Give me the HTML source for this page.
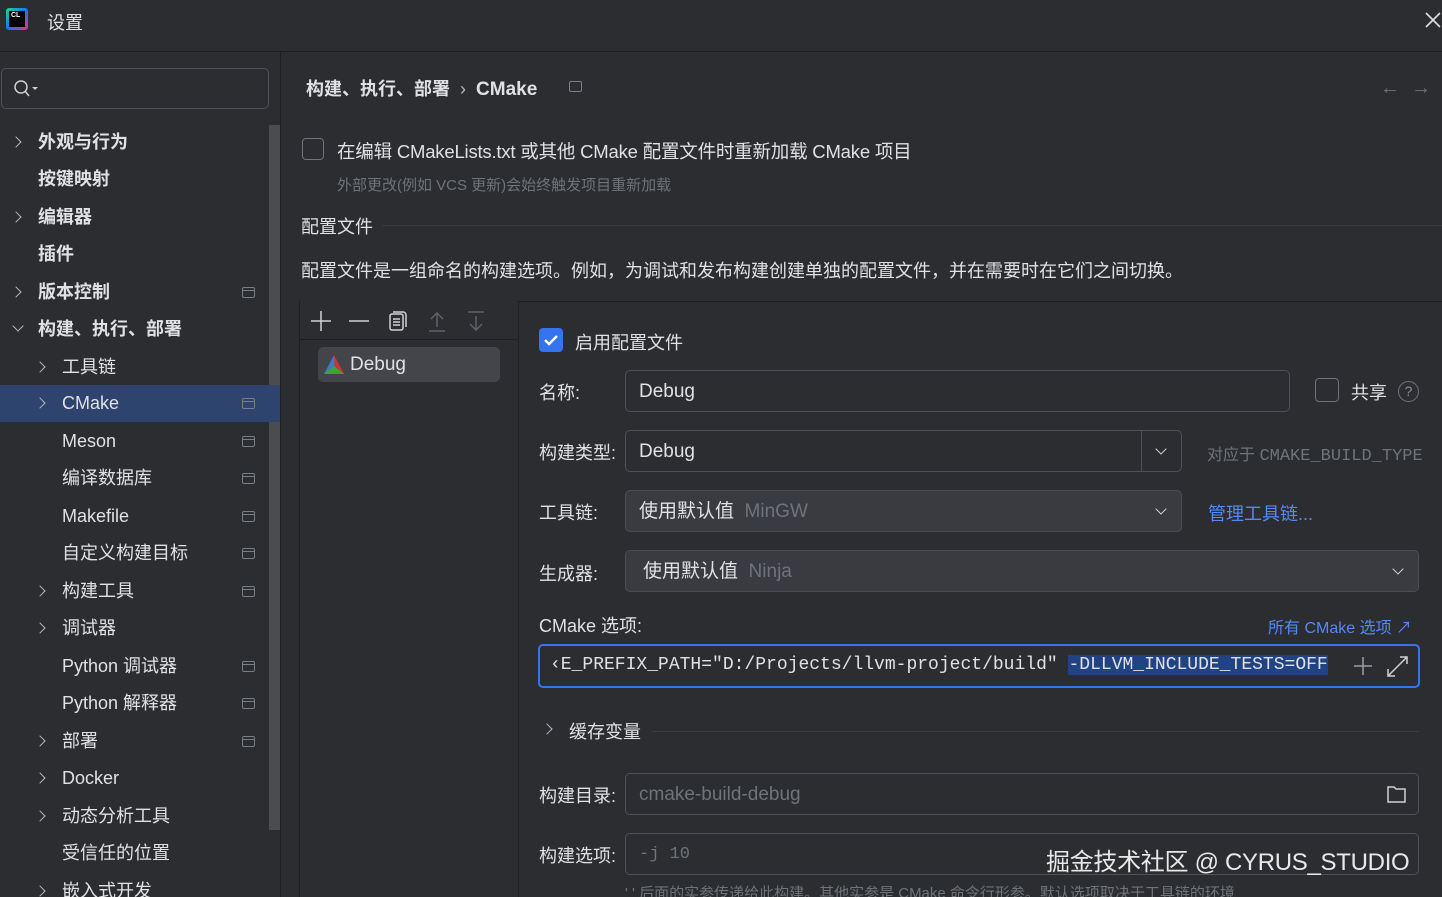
<!DOCTYPE html>
<html style="overflow:hidden;height:897px"><head><meta charset="utf-8"><style>
*{box-sizing:border-box;margin:0;padding:0}
body{width:1442px;height:897px;overflow:hidden;background:#2b2d30;font-family:"Liberation Sans","Noto Sans CJK SC",sans-serif;color:#dfe1e5;position:relative;font-size:18px}
.a{position:absolute;white-space:nowrap}
.row{position:absolute;left:0;width:270px;height:37px;line-height:37px;font-size:18px}
.row.b{font-weight:bold}
.chev{position:absolute;width:8px;height:8px;border-right:1.5px solid #b4b8bf;border-bottom:1.5px solid #b4b8bf;transform:rotate(-45deg)}
.chev.d{transform:rotate(45deg)}
.pin{position:absolute;left:242px;top:13px;width:13px;height:11px;border:1.5px solid #7a7e85;border-radius:2px}
.pin:after{content:"";position:absolute;left:0;right:0;top:2px;border-top:1.5px solid #7a7e85}
.inp{position:absolute;border:1px solid #4e5157;border-radius:5px;height:42px;line-height:40px;padding-left:13px;font-size:19px}
.dd{background:#393b40;border-color:#4a4d52}
.arr{position:absolute;width:8px;height:8px;border-right:1.5px solid #cfd1d5;border-bottom:1.5px solid #cfd1d5;transform:rotate(45deg)}
.lbl{position:absolute;font-size:18px;left:539px}
.mono{font-family:"Liberation Mono","DejaVu Sans Mono",monospace}
</style></head><body>
<div class="a" style="left:6px;top:8px;width:22px;height:22px;background:linear-gradient(135deg,#21d789,#087cfa 50%,#fc2b76);border-radius:3px"></div>
<div class="a" style="left:9px;top:11px;width:16px;height:16px;background:#000;color:#fff;font-size:7px;font-weight:bold;padding:1px 2px">CL</div>
<div class="a" style="left:47px;top:9px;font-size:18px">设置</div>
<svg class="a" style="left:1424px;top:10px" width="18" height="20"><path d="M2 3L16 17M16 3L2 17" stroke="#dfe1e5" stroke-width="1.6"/></svg>
<div class="a" style="left:0;top:51px;width:1442px;border-top:1px solid #1e1f22"></div>
<div class="a" style="left:1px;top:68px;width:268px;height:41px;border:1px solid #4e5157;border-radius:5px"></div>
<svg class="a" style="left:12px;top:78px" width="28" height="22"><circle cx="9" cy="9" r="6" stroke="#cfd1d5" stroke-width="1.5" fill="none"/><path d="M13 13L17 18" stroke="#cfd1d5" stroke-width="1.5"/><path d="M20 9h6l-3 3z" fill="#cfd1d5"/></svg>
<div class="a" style="left:269px;top:125px;width:11px;height:705px;background:#4a4c50"></div>
<div class="a" style="left:0;top:385px;width:280px;height:37px;background:#2e436e"></div>
<div class="row b" style="top:124px"><span class="chev" style="left:12px;top:14px"></span><span class="a" style="left:38px">外观与行为</span></div>
<div class="row b" style="top:161px"><span class="a" style="left:38px">按键映射</span></div>
<div class="row b" style="top:199px"><span class="chev" style="left:12px;top:14px"></span><span class="a" style="left:38px">编辑器</span></div>
<div class="row b" style="top:236px"><span class="a" style="left:38px">插件</span></div>
<div class="row b" style="top:274px"><span class="chev" style="left:12px;top:14px"></span><span class="a" style="left:38px">版本控制</span><span class="pin"></span></div>
<div class="row b" style="top:311px"><span class="chev d" style="left:14px;top:11px"></span><span class="a" style="left:38px">构建、执行、部署</span></div>
<div class="row" style="top:349px"><span class="chev" style="left:36px;top:14px"></span><span class="a" style="left:62px">工具链</span></div>
<div class="row" style="top:385px"><span class="chev" style="left:36px;top:14px"></span><span class="a" style="left:62px">CMake</span><span class="pin"></span></div>
<div class="row" style="top:423px"><span class="a" style="left:62px">Meson</span><span class="pin"></span></div>
<div class="row" style="top:460px"><span class="a" style="left:62px">编译数据库</span><span class="pin"></span></div>
<div class="row" style="top:498px"><span class="a" style="left:62px">Makefile</span><span class="pin"></span></div>
<div class="row" style="top:535px"><span class="a" style="left:62px">自定义构建目标</span><span class="pin"></span></div>
<div class="row" style="top:573px"><span class="chev" style="left:36px;top:14px"></span><span class="a" style="left:62px">构建工具</span><span class="pin"></span></div>
<div class="row" style="top:610px"><span class="chev" style="left:36px;top:14px"></span><span class="a" style="left:62px">调试器</span></div>
<div class="row" style="top:648px"><span class="a" style="left:62px">Python 调试器</span><span class="pin"></span></div>
<div class="row" style="top:685px"><span class="a" style="left:62px">Python 解释器</span><span class="pin"></span></div>
<div class="row" style="top:723px"><span class="chev" style="left:36px;top:14px"></span><span class="a" style="left:62px">部署</span><span class="pin"></span></div>
<div class="row" style="top:760px"><span class="chev" style="left:36px;top:14px"></span><span class="a" style="left:62px">Docker</span></div>
<div class="row" style="top:798px"><span class="chev" style="left:36px;top:14px"></span><span class="a" style="left:62px">动态分析工具</span></div>
<div class="row" style="top:835px"><span class="a" style="left:62px">受信任的位置</span></div>
<div class="row" style="top:873px"><span class="chev" style="left:36px;top:14px"></span><span class="a" style="left:62px">嵌入式开发</span></div>
<div class="a" style="left:280px;top:52px;height:845px;border-left:1px solid #1e1f22"></div>
<div class="a" style="left:306px;top:75px;font-size:18px;font-weight:bold">构建、执行、部署 &nbsp;<span style="font-weight:normal;color:#b4b8bf">›</span>&nbsp; <span style="font-size:19px">CMake</span></div>
<div class="a" style="left:569px;top:81px;width:13px;height:11px;border:1.5px solid #7a7e85;border-radius:2px"></div>
<div class="a" style="left:1380px;top:77px;color:#6f737a;font-size:20px">←&nbsp;&nbsp;→</div>
<div class="a" style="left:302px;top:138px;width:22px;height:22px;border:1.5px solid #6f737a;border-radius:4px"></div>
<div class="a" style="left:337px;top:138px;font-size:18.5px;letter-spacing:-0.2px">在编辑 CMakeLists.txt 或其他 CMake 配置文件时重新加载 CMake 项目</div>
<div class="a" style="left:337px;top:174px;font-size:15px;color:#6f737a">外部更改(例如 VCS 更新)会始终触发项目重新加载</div>
<div class="a" style="left:301px;top:213px;font-size:18px">配置文件</div>
<div class="a" style="left:382px;top:225px;width:1060px;border-top:1px solid #393b40"></div>
<div class="a" style="left:301px;top:257px;font-size:18px">配置文件是一组命名的构建选项。例如，为调试和发布构建创建单独的配置文件，并在需要时在它们之间切换。</div>
<div class="a" style="left:299px;top:301px;width:1143px;border-top:1px solid #1e1f22"></div>
<div class="a" style="left:299px;top:301px;width:220px;height:596px;background:#2b2d30;border-left:1px solid #1e1f22;border-right:1px solid #1e1f22"></div>
<div class="a" style="left:300px;top:339px;width:219px;border-top:1px solid #1e1f22"></div>
<svg class="a" style="left:308px;top:309px" width="190" height="26"><g stroke="#cfd1d5" stroke-width="1.5" fill="none"><path d="M3 12h20M13 2v20"/><path d="M41 12h20"/><rect x="82" y="5" width="13" height="16" rx="2"/><path d="M85 3h10a3 3 0 0 1 3 3v12M85 10h7M85 13h7M85 16h7"/></g><g stroke="#5f6268" stroke-width="1.5" fill="none"><path d="M121 22h16M129 18V4M123 10l6-6 6 6"/><path d="M160 3h16M168 7v14M162 15l6 6 6-6"/></g></svg>
<div class="a" style="left:318px;top:347px;width:182px;height:35px;background:#43454a;border-radius:5px"></div>
<svg class="a" style="left:323px;top:354px" width="22" height="21"><path d="M11 1L1 20h20z" fill="#3c7ac4"/><path d="M11 1L21 20H12z" fill="#d03030"/><path d="M1 20L11 12L21 20z" fill="#3aa43a"/></svg>
<div class="a" style="left:350px;top:354px;font-size:19px">Debug</div>
<div class="a" style="left:539px;top:328px;width:24px;height:24px;background:#3574f0;border-radius:4px"></div>
<svg class="a" style="left:539px;top:328px" width="24" height="24"><path d="M6 12l4 4 8-8" stroke="#fff" stroke-width="2.4" fill="none"/></svg>
<div class="a" style="left:575px;top:329px;font-size:18px">启用配置文件</div>
<div class="lbl" style="top:379px">名称:</div>
<div class="inp" style="left:625px;top:370px;width:665px;line-height:42px">Debug</div>
<div class="a" style="left:1315px;top:378px;width:24px;height:24px;border:1.5px solid #6f737a;border-radius:4px"></div>
<div class="a" style="left:1351px;top:379px;font-size:18px">共享</div>
<div class="a" style="left:1398px;top:381px;width:21px;height:21px;border:1.5px solid #6f737a;border-radius:50%;color:#8a8e95;font-size:14px;text-align:center;line-height:18px">?</div>
<div class="lbl" style="top:439px">构建类型:</div>
<div class="inp" style="left:625px;top:430px;width:557px;line-height:42px">Debug</div>
<div class="a" style="left:1141px;top:431px;height:40px;border-left:1px solid #4e5157"></div>
<div class="arr" style="left:1157px;top:445px"></div>
<div class="a" style="left:1207px;top:441px;font-size:16px;color:#6f737a">对应于 <span class="mono" style="font-size:17px">CMAKE_BUILD_TYPE</span></div>
<div class="lbl" style="top:499px">工具链:</div>
<div class="inp dd" style="left:625px;top:490px;width:557px;line-height:42px">使用默认值 <span style="color:#6f737a">&nbsp;MinGW</span></div>
<div class="arr" style="left:1157px;top:505px"></div>
<div class="a" style="left:1208px;top:500px;font-size:18px;color:#548af7">管理工具链...</div>
<div class="lbl" style="top:560px">生成器:</div>
<div class="inp dd" style="left:625px;top:550px;width:794px;padding-left:17px;line-height:42px">使用默认值 <span style="color:#6f737a">&nbsp;Ninja</span></div>
<div class="arr" style="left:1394px;top:565px"></div>
<div class="lbl" style="top:612px">CMake 选项:</div>
<div class="a" style="left:1268px;top:614px;font-size:16px;color:#548af7">所有 CMake 选项 ↗</div>
<div class="a" style="left:538px;top:644px;width:882px;height:44px;border:2px solid #3574f0;border-radius:5px"></div>
<div class="a mono" style="left:550px;top:655px;font-size:18px">‹E_PREFIX_PATH="D:/Projects/llvm-project/build" <span style="background:#214283">-DLLVM_INCLUDE_TESTS=OFF</span></div>
<svg class="a" style="left:1352px;top:654px" width="60" height="26"><path d="M11 3v18M2 12h18" stroke="#9a9ea5" stroke-width="1.5"/><path d="M36 22L55 3M48 3h7v7M36 15v7h7" stroke="#cfd1d5" stroke-width="1.5" fill="none"/></svg>
<div class="chev" style="left:543px;top:725px"></div>
<div class="a" style="left:569px;top:718px;font-size:18px">缓存变量</div>
<div class="a" style="left:652px;top:731px;width:767px;border-top:1px solid #393b40"></div>
<div class="lbl" style="top:782px">构建目录:</div>
<div class="inp" style="left:625px;top:773px;width:794px;color:#6f737a;line-height:42px">cmake-build-debug</div>
<svg class="a" style="left:1386px;top:784px" width="22" height="20"><path d="M2 3h6l2 2h9v13H2z" stroke="#cfd1d5" stroke-width="1.5" fill="none"/></svg>
<div class="lbl" style="top:842px">构建选项:</div>
<div class="inp mono" style="left:625px;top:833px;width:794px;color:#6f737a;font-size:17px;line-height:42px">-j 10</div>
<div class="a" style="left:1046px;top:842px;font-size:24px;color:#e8e8e8;letter-spacing:-0.3px">掘金技术社区 @ CYRUS_STUDIO</div>
<div class="a" style="left:625px;top:882px;font-size:15px;color:#6f737a">' ' 后面的实参传递给此构建。其他实参是 CMake 命令行形参。默认选项取决于工具链的环境</div>
</body></html>
